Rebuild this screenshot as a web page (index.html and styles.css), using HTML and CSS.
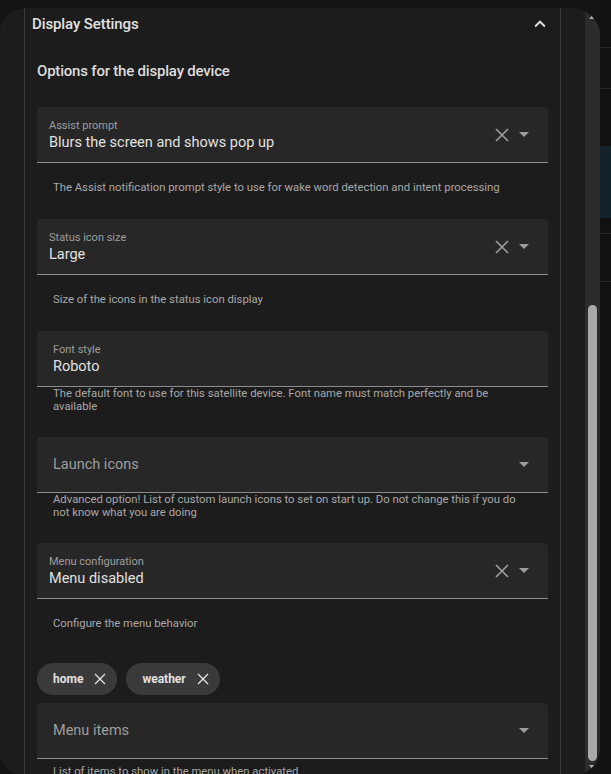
FILE: index.html
```html
<!DOCTYPE html>
<html lang="en">
<head>
    <meta charset="UTF-8">
    <meta name="viewport" content="width=device-width, initial-scale=1.0">
    <title>Display Settings</title>
    <link rel="stylesheet" href="styles.css">
</head>
<body>
    <div class="dialog">
        <div class="dialog-content">
            <div class="panel">
                <div class="panel-header">
                    <span class="panel-title">Display Settings</span>
                    <svg class="chevron" width="22" height="22" viewBox="0 0 24 24"><path d="M7.41 15.41L12 10.83l4.59 4.58L18 14l-6-6-6 6z" fill="#e1e1e1"/></svg>
                </div>
                <div class="panel-body">
                    <div class="section-title">Options for the display device</div>

                    <div class="field select">
                        <div class="field-text">
                            <div class="field-label">Assist prompt</div>
                            <div class="field-value">Blurs the screen and shows pop up</div>
                        </div>
                        <svg class="clear-icon" width="14" height="14" viewBox="0 0 14 14"><path d="M1 1L13 13M13 1L1 13" stroke="#9e9e9e" stroke-width="1.6"/></svg>
                        <span class="arrow"></span>
                    </div>
                    <div class="helper spaced">The Assist notification prompt style to use for wake word detection and intent processing</div>

                    <div class="field select">
                        <div class="field-text">
                            <div class="field-label">Status icon size</div>
                            <div class="field-value">Large</div>
                        </div>
                        <svg class="clear-icon" width="14" height="14" viewBox="0 0 14 14"><path d="M1 1L13 13M13 1L1 13" stroke="#9e9e9e" stroke-width="1.6"/></svg>
                        <span class="arrow"></span>
                    </div>
                    <div class="helper spaced">Size of the icons in the status icon display</div>

                    <div class="field textfield">
                        <div class="field-text">
                            <div class="field-label">Font style</div>
                            <div class="field-value">Roboto</div>
                        </div>
                    </div>
                    <div class="helper tight">The default font to use for this satellite device. Font name must match perfectly and be available</div>

                    <div class="field textfield">
                        <div class="field-placeholder">Launch icons</div>
                        <span class="arrow"></span>
                    </div>
                    <div class="helper tight">Advanced option! List of custom launch icons to set on start up. Do not change this if you do not know what you are doing</div>

                    <div class="field select">
                        <div class="field-text">
                            <div class="field-label">Menu configuration</div>
                            <div class="field-value">Menu disabled</div>
                        </div>
                        <svg class="clear-icon" width="14" height="14" viewBox="0 0 14 14"><path d="M1 1L13 13M13 1L1 13" stroke="#9e9e9e" stroke-width="1.6"/></svg>
                        <span class="arrow"></span>
                    </div>
                    <div class="helper spaced">Configure the menu behavior</div>

                    <div class="chips">
                        <div class="chip">home
                            <svg width="12" height="12" viewBox="0 0 12 12"><path d="M1 1L11 11M11 1L1 11" stroke="#e1e1e1" stroke-width="1.4"/></svg>
                        </div>
                        <div class="chip">weather
                            <svg width="12" height="12" viewBox="0 0 12 12"><path d="M1 1L11 11M11 1L1 11" stroke="#e1e1e1" stroke-width="1.4"/></svg>
                        </div>
                    </div>

                    <div class="field textfield">
                        <div class="field-placeholder">Menu items</div>
                        <span class="arrow"></span>
                    </div>
                    <div class="helper last">List of items to show in the menu when activated</div>
                </div>
            </div>
        </div>
        <div class="scrollbar">
            <span class="scroll-up"></span>
            <div class="scroll-thumb"></div>
            <span class="scroll-down"></span>
        </div>
    </div>
    <div class="backdrop">
        <div class="bd-row r1"></div>
        <div class="bd-row r2"></div>
        <div class="bd-row teal"></div>
        <div class="bd-row r3"></div>
        <div class="bd-row r4"></div>
    </div>
</body>
</html>
```

FILE: styles.css
```css
body {
    margin: 0;
    background-color: #141414;
    font-family: Roboto, "Liberation Sans", sans-serif;
    color: #e1e1e1;
    display: flex;
    height: 774px;
    overflow: hidden;
}
.dialog {
    width: 601px;
    height: 768px;
    margin-top: 8px;
    margin-left: -1px;
    background-color: #1c1c1c;
    border-radius: 28px;
    overflow: hidden;
    display: flex;
    flex-shrink: 0;
}
.dialog-content {
    flex: 1;
    padding-left: 25px;
}
.panel {
    width: 535px;
    height: 100%;
    border-left: 1px solid #3a3a3a;
    border-right: 1px solid #3a3a3a;
}
.panel-header {
    height: 32px;
    display: flex;
    align-items: center;
    justify-content: space-between;
    padding: 0 9px 0 7px;
}
.panel-title {
    font-size: 15px;
    font-weight: 500;
    letter-spacing: -0.1px;
}
.panel-body {
    padding: 0 12px;
}
.section-title {
    margin-top: 21px;
    margin-bottom: 26px;
    line-height: 20px;
    font-size: 15px;
    font-weight: 500;
    letter-spacing: -0.2px;
    color: #dcdcdc;
}
.field {
    height: 55px;
    border-bottom: 1px solid #8c8c8c;
    background-color: #272727;
    border-radius: 4px 4px 0 0;
    display: flex;
    align-items: center;
    padding-right: 19px;
}
.field.select {
    padding-left: 12px;
}
.field.textfield {
    padding-left: 16px;
}
.field-text {
    flex: 1;
    align-self: flex-start;
    padding-top: 12px;
}
.field-label {
    font-size: 11px;
    line-height: 13px;
    color: #9e9e9e;
}
.field-value {
    font-size: 14.5px;
    line-height: 21px;
}
.field-placeholder {
    flex: 1;
    font-size: 14.5px;
    color: #9e9e9e;
}
.clear-icon {
    margin-right: 10px;
}
.arrow {
    width: 0;
    height: 0;
    border-left: 5px solid transparent;
    border-right: 5px solid transparent;
    border-top: 5px solid #9e9e9e;
}
.helper {
    padding: 0 16px;
    font-size: 11.3px;
    line-height: 13px;
    color: #a8a8a8;
}
.helper.spaced {
    padding-top: 18px;
    padding-bottom: 25px;
}
.helper.tight {
    padding-top: 0;
    padding-bottom: 24px;
}
.helper.last {
    padding-top: 6px;
}
.chips {
    display: flex;
    gap: 9px;
    padding: 8px 0;
}
.chip {
    height: 32px;
    border-radius: 16px;
    background-color: #3a3a3a;
    display: flex;
    align-items: center;
    gap: 11px;
    padding: 0 11px 0 16px;
    font-size: 12px;
    font-weight: 700;
}
.scrollbar {
    width: 15px;
    background-color: #2c2c2c;
    display: flex;
    flex-direction: column;
    align-items: center;
}
.scroll-up {
    margin-top: 6px;
    width: 0;
    height: 0;
    border-left: 4px solid transparent;
    border-right: 4px solid transparent;
    border-bottom: 5px solid #a8a8a8;
}
.scroll-thumb {
    width: 9px;
    margin-top: 286px;
    flex: 1;
    background-color: #a8a8a8;
    border-radius: 5px;
}
.scroll-down {
    margin: 4px 0 6px;
    width: 0;
    height: 0;
    border-left: 4px solid transparent;
    border-right: 4px solid transparent;
    border-top: 5px solid #a8a8a8;
}
.backdrop {
    flex: 1;
    background-color: #111111;
}
.bd-row {
    border-bottom: 1px solid #262626;
}
.bd-row.r1 {
    height: 47px;
}
.bd-row.r2 {
    height: 40px;
}
.bd-row.teal {
    height: 72px;
    border-bottom: none;
    border-top: 57px solid #111111;
    background-color: #13232a;
}
.bd-row.r3 {
    height: 15px;
}
.bd-row.r4 {
    height: 47px;
}
```
